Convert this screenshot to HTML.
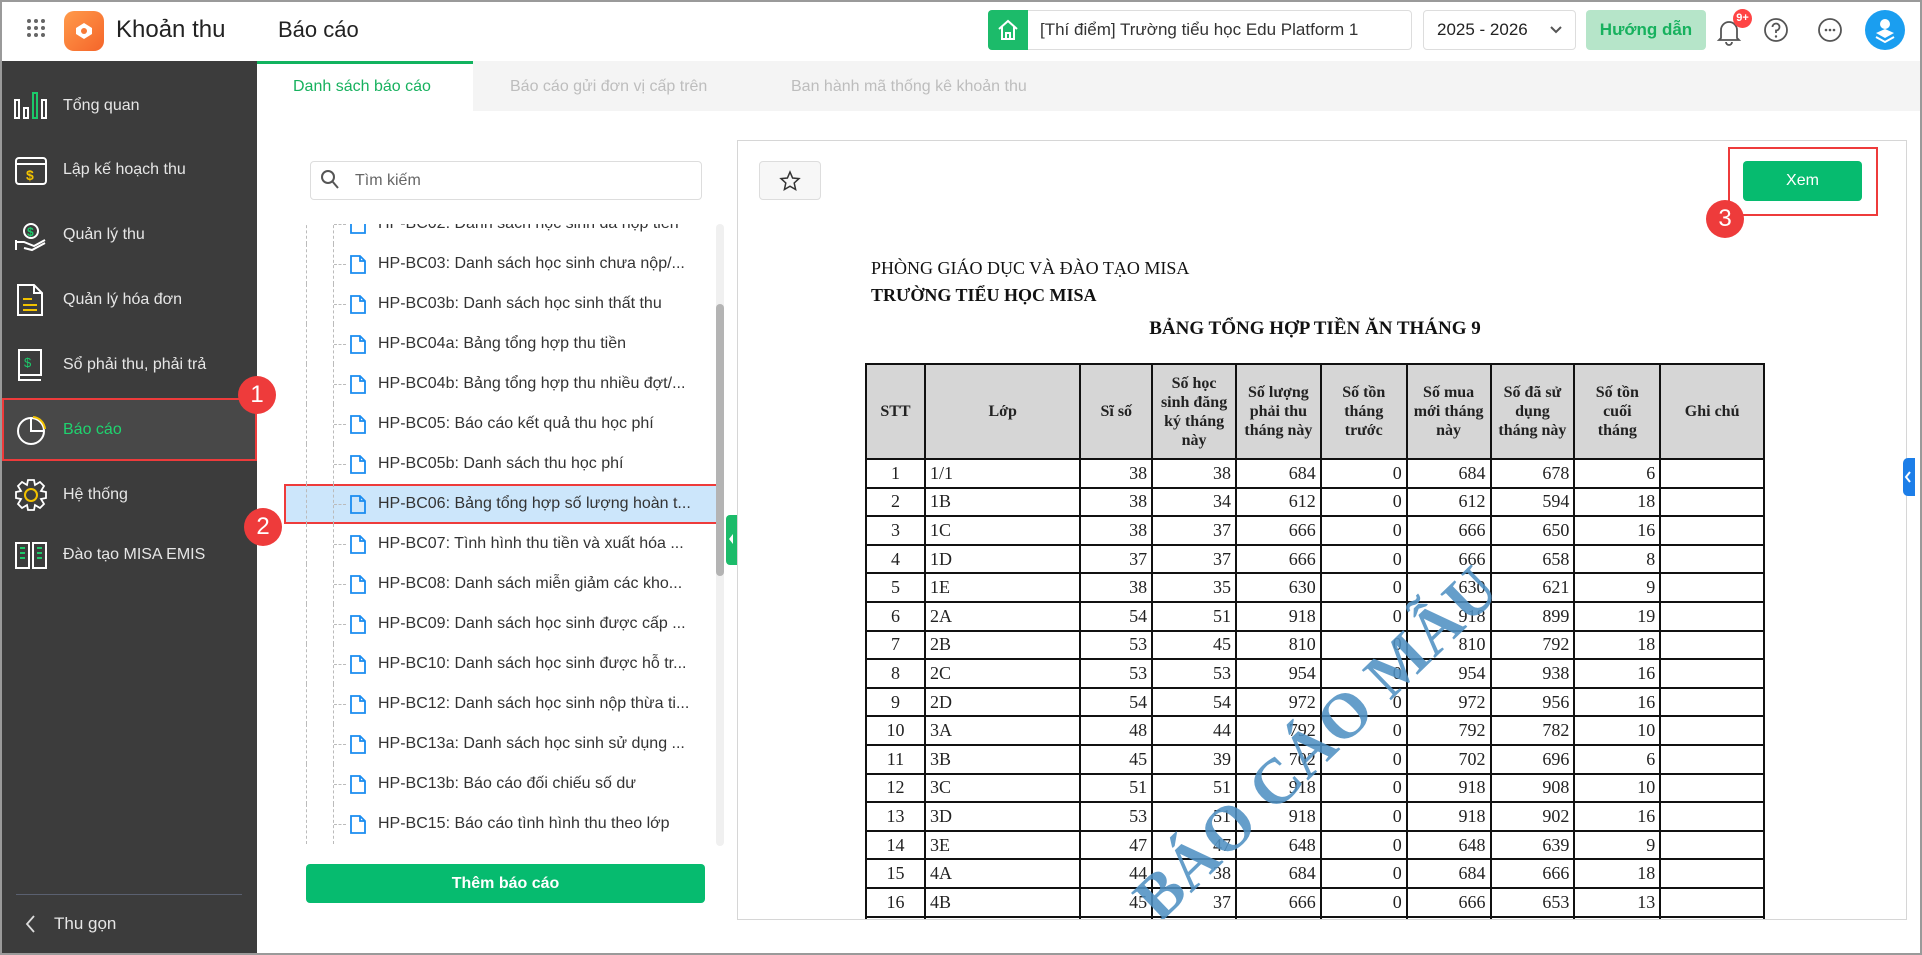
<!DOCTYPE html>
<html><head><meta charset="utf-8"><style>
*{box-sizing:border-box;margin:0;padding:0}
body{width:1922px;height:955px;overflow:hidden;background:#fff;font-family:"Liberation Sans",Arial,sans-serif;position:relative;color:#222}
.a{position:absolute}
.frame{position:absolute;left:0;top:0;width:1922px;height:955px;border:2px solid #9a9a9a;pointer-events:none;z-index:50}
.side{left:0;top:61px;width:257px;height:894px;background:#3c3c3c}
.si{position:absolute;left:0;width:257px;height:40px;display:flex;align-items:center;color:#e6e6e6;font-size:16px}
.si svg{position:absolute;left:14px}
.si span{position:absolute;left:63px}
.tabs{left:257px;top:61px;width:1665px;height:50px;background:#f4f4f4}
.li{position:absolute;left:284px;width:442px;height:40px}
.li .t{position:absolute;left:94px;top:11px;font-size:16px;color:#333;white-space:nowrap}
.li svg{position:absolute;left:66px;top:11px}
.li .v1{position:absolute;left:22px;top:0;height:40px;border-left:1px dashed #bbb}
.li .v2{position:absolute;left:49px;top:0;height:40px;border-left:1px dashed #bbb}
.li .h{position:absolute;left:50px;top:20px;width:12px;border-top:1px dashed #bbb}
.badge{position:absolute;width:38px;height:38px;border-radius:50%;background:#ee3b3b;color:#fff;font-size:24px;text-align:center;line-height:38px;z-index:20}
table{border-collapse:collapse;font-family:"Liberation Serif","Times New Roman",serif}
td,th{border:2px solid #111;font-size:18px;height:28.6px;padding:0 4px}
th{background:#d6d6d6;font-size:16px;line-height:19px;font-weight:bold;text-align:center;padding:0 9px}
td{text-align:right}
td:first-child{text-align:center}
td:nth-child(2){text-align:left}
</style></head><body>
<div class="a" style="left:0;top:0;width:1922px;height:61px;background:#fff;box-shadow:0 1px 3px rgba(0,0,0,.08)"></div>
<svg class="a" style="left:26px;top:18px" width="20" height="20"><g fill="#666"><circle cx="3" cy="3" r="2"/><circle cx="10" cy="3" r="2"/><circle cx="17" cy="3" r="2"/><circle cx="3" cy="10" r="2"/><circle cx="10" cy="10" r="2"/><circle cx="17" cy="10" r="2"/><circle cx="3" cy="17" r="2"/><circle cx="10" cy="17" r="2"/><circle cx="17" cy="17" r="2"/></g></svg>
<div class="a" style="left:64px;top:11px;width:40px;height:40px;border-radius:10px;background:linear-gradient(135deg,#ff9a4a,#f5652a)"></div>
<svg class="a" style="left:72px;top:19px" width="24" height="24"><path d="M4 9 L12 4 L20 9 L20 15 L12 20 L4 15Z" fill="#fff"/><circle cx="12" cy="12" r="3" fill="#f77a37"/></svg>
<div class="a" style="left:116px;top:16px;font-size:24px;font-weight:500;color:#222">Khoản thu</div>
<div class="a" style="left:278px;top:17px;font-size:22px;color:#222">Báo cáo</div>
<div class="a" style="left:988px;top:10px;width:424px;height:40px;border:1px solid #ddd;border-radius:4px"></div>
<div class="a" style="left:988px;top:10px;width:40px;height:40px;background:#1cbb6a;border-radius:4px 0 0 4px"></div>
<svg class="a" style="left:996px;top:18px" width="24" height="24"><path d="M3 11 L12 3 L21 11 M6 9 V21 H18 V9 M10 21 V15 H14 V21" fill="none" stroke="#fff" stroke-width="2"/></svg>
<div class="a" style="left:1040px;top:20px;font-size:17px;color:#333">[Thí điểm] Trường tiểu học Edu Platform 1</div>
<div class="a" style="left:1423px;top:10px;width:153px;height:40px;border:1px solid #ddd;border-radius:4px"></div>
<div class="a" style="left:1437px;top:20px;font-size:17px;color:#222">2025 - 2026</div>
<svg class="a" style="left:1550px;top:25px" width="12" height="10"><path d="M1 2 L6 7 L11 2" fill="none" stroke="#555" stroke-width="2"/></svg>
<div class="a" style="left:1586px;top:10px;width:120px;height:40px;background:#b6e5c9;border-radius:4px;color:#17b15e;font-size:17px;font-weight:bold;text-align:center;line-height:40px">Hướng dẫn</div>
<svg class="a" style="left:1715px;top:16px" width="28" height="30"><path d="M6 22 V14 A8 8 0 0 1 22 14 V22 L24 24 H4 Z M11 26 A3 3 0 0 0 17 26" fill="none" stroke="#555" stroke-width="1.8"/></svg>
<div class="a" style="left:1733px;top:9px;width:19px;height:19px;border-radius:50%;background:#f44;color:#fff;font-size:11px;font-weight:bold;text-align:center;line-height:19px">9+</div>
<svg class="a" style="left:1763px;top:17px" width="26" height="26"><circle cx="13" cy="13" r="11" fill="none" stroke="#555" stroke-width="1.8"/><path d="M9.5 10 A3.5 3.5 0 1 1 13 13.5 V16" fill="none" stroke="#555" stroke-width="1.8"/><circle cx="13" cy="19.5" r="1.2" fill="#555"/></svg>
<svg class="a" style="left:1817px;top:17px" width="26" height="26"><circle cx="13" cy="13" r="11" fill="none" stroke="#555" stroke-width="1.8"/><circle cx="9" cy="13" r="1.3" fill="#555"/><circle cx="13" cy="13" r="1.3" fill="#555"/><circle cx="17" cy="13" r="1.3" fill="#555"/></svg>
<div class="a" style="left:1865px;top:10px;width:40px;height:40px;border-radius:50%;background:#1a9ef0"></div>
<svg class="a" style="left:1873px;top:16px" width="24" height="28"><circle cx="12" cy="8" r="5" fill="#fff"/><path d="M3 17 L12 22 L21 17 L12 13Z" fill="#fff"/><path d="M3 21 L12 26 L21 21" fill="none" stroke="#fff" stroke-width="2"/></svg>

<div class="a side"></div>
<div class="si" style="top:86px"><svg width="34" height="28"><g fill="none" stroke="#fff" stroke-width="2"><rect x="1" y="8" width="4" height="18"/><rect x="10" y="16" width="4" height="10"/><rect x="28" y="8" width="4" height="18"/></g><rect x="19" y="1" width="4" height="25" fill="none" stroke="#1cc96a" stroke-width="2"/></svg><span>Tổng quan</span></div>
<div class="si" style="top:150px"><svg width="34" height="32"><rect x="2" y="4" width="30" height="26" rx="3" fill="none" stroke="#fff" stroke-width="2"/><path d="M2 10 H32" stroke="#fff" stroke-width="2"/><text x="12" y="26" fill="#f2c200" font-size="14" font-weight="bold" font-family="Liberation Sans">$</text></svg><span>Lập kế hoạch thu</span></div>
<div class="si" style="top:215px"><svg width="34" height="34"><circle cx="17" cy="13" r="7" fill="none" stroke="#fff" stroke-width="2"/><text x="13" y="18" fill="#1cc96a" font-size="12" font-weight="bold" font-family="Liberation Sans">$</text><path d="M2 24 H10 L20 28 L31 22 M2 22 V32 M10 30 L18 32 L31 25" fill="none" stroke="#fff" stroke-width="2"/></svg><span>Quản lý thu</span></div>
<div class="si" style="top:280px"><svg width="34" height="34"><path d="M4 2 H20 L28 10 V32 H4 Z M20 2 V10 H28" fill="none" stroke="#fff" stroke-width="2"/><path d="M9 16 H18 M9 22 H23 M9 27 H23" stroke="#f2c200" stroke-width="2"/></svg><span>Quản lý hóa đơn</span></div>
<div class="si" style="top:345px"><svg width="34" height="34"><path d="M5 2 H27 V27 H5 Z M5 27 V32 H27" fill="none" stroke="#fff" stroke-width="2"/><text x="10" y="19" fill="#1cc96a" font-size="13" font-family="Liberation Sans">$</text></svg><span>Sổ phải thu, phải trả</span></div>
<div class="a" style="left:2px;top:398px;width:255px;height:63px;background:#484848;border:2px solid #ee3b3b"></div>
<div class="si" style="top:410px;z-index:2"><svg width="34" height="34"><circle cx="17" cy="18" r="13" fill="none" stroke="#fff" stroke-width="2"/><path d="M17 5 V18 H30" fill="none" stroke="#fff" stroke-width="2"/><path d="M19 4 A13 13 0 0 1 31 16" fill="none" stroke="#f2c200" stroke-width="2"/></svg><span style="color:#1fd36f">Báo cáo</span></div>
<div class="si" style="top:475px"><svg width="34" height="34"><circle cx="17" cy="17" r="6" fill="none" stroke="#f2c200" stroke-width="2"/><path d="M14 2 H20 L21 7 L26 4 L30 8 L27 13 L32 14 V20 L27 21 L30 26 L26 30 L21 27 L20 32 H14 L13 27 L8 30 L4 26 L7 21 L2 20 V14 L7 13 L4 8 L8 4 L13 7Z" fill="none" stroke="#fff" stroke-width="1.8"/></svg><span>Hệ thống</span></div>
<div class="si" style="top:535px"><svg width="34" height="34"><path d="M2 5 H15 V30 H2 Z M19 5 H32 V30 H19 Z" fill="none" stroke="#fff" stroke-width="2"/><path d="M6 10 H11 M6 15 H11 M6 20 H11 M23 10 H28 M23 15 H28 M23 20 H28" stroke="#1cc96a" stroke-width="2"/></svg><span>Đào tạo MISA EMIS</span></div>
<div class="a" style="left:16px;top:894px;width:226px;border-top:1px solid #5a6070"></div>
<svg class="a" style="left:24px;top:914px" width="12" height="20"><path d="M10 2 L3 10 L10 18" fill="none" stroke="#ddd" stroke-width="1.8"/></svg>
<div class="a" style="left:54px;top:914px;font-size:17px;color:#e6e6e6">Thu gọn</div>
<div class="badge" style="left:238px;top:376px">1</div>

<div class="a tabs"></div>
<div class="a" style="left:257px;top:61px;width:216px;height:50px;background:#fff;border-top:3px solid #12b35f"></div>
<div class="a" style="left:293px;top:78px;font-size:16px;color:#17b15e;font-weight:500">Danh sách báo cáo</div>
<div class="a" style="left:510px;top:78px;font-size:16px;color:#bdbdbd">Báo cáo gửi đơn vị cấp trên</div>
<div class="a" style="left:791px;top:78px;font-size:16px;color:#bdbdbd">Ban hành mã thống kê khoản thu</div>

<div class="a" style="left:310px;top:161px;width:392px;height:39px;border:1px solid #ddd;border-radius:4px"></div>
<svg class="a" style="left:320px;top:169px" width="20" height="22"><circle cx="8" cy="8" r="6" fill="none" stroke="#555" stroke-width="2"/><path d="M12.5 12.5 L18 19" stroke="#555" stroke-width="2"/></svg>
<div class="a" style="left:355px;top:172px;font-size:16px;color:#666">Tìm kiếm</div>
<div class="a" style="left:716px;top:224px;width:8px;height:622px;background:#f0f0f0;border-radius:4px"></div>
<div class="a" style="left:716px;top:304px;width:8px;height:272px;background:#b4b4b4;border-radius:4px"></div>
<div class="a" style="left:726px;top:515px;width:11px;height:50px;background:#1cbb6a;border-radius:4px 0 0 4px"></div>
<svg class="a" style="left:727px;top:532px" width="8" height="14"><path d="M6 2 L2 7 L6 12Z" fill="#fff"/></svg>
<div class="a" style="left:306px;top:864px;width:399px;height:39px;background:#06bb6f;border-radius:4px;color:#fff;font-size:16px;font-weight:bold;text-align:center;line-height:39px">Thêm báo cáo</div>
<div class="badge" style="left:244px;top:508px">2</div>

<div class="a" style="left:737px;top:140px;width:1170px;height:780px;border:1px solid #d6d6d6;overflow:hidden">
  <div class="a" style="left:21px;top:20px;width:62px;height:39px;border:1px solid #ddd;border-radius:4px;background:#f7f7f7"></div>
  <svg class="a" style="left:41px;top:29px" width="22" height="22"><path d="M11 2 L13.6 8 L20 8.6 L15.2 13 L16.6 19.5 L11 16.2 L5.4 19.5 L6.8 13 L2 8.6 L8.4 8Z" fill="none" stroke="#333" stroke-width="1.5"/></svg>
  <div class="a" style="left:1005px;top:20px;width:119px;height:40px;background:#06bb6f;border-radius:4px;color:#fff;font-size:16px;text-align:center;line-height:40px">Xem</div>
  <div class="a" style="left:133px;top:117px;font-family:'Liberation Serif',serif;font-size:18px;color:#111">PHÒNG GIÁO DỤC VÀ ĐÀO TẠO MISA</div>
  <div class="a" style="left:133px;top:144px;font-family:'Liberation Serif',serif;font-size:18px;font-weight:bold;color:#111">TRƯỜNG TIỂU HỌC MISA</div>
  <div class="a" style="left:127px;top:177px;width:900px;text-align:center;font-family:'Liberation Serif',serif;font-size:19px;font-weight:bold;color:#111">BẢNG TỔNG HỢP TIỀN ĂN THÁNG 9</div>
  <table class="a" style="left:127px;top:222px;width:900px">
   <colgroup><col style="width:59px"><col style="width:156px"><col style="width:72px"><col style="width:84px"><col style="width:85px"><col style="width:86px"><col style="width:84px"><col style="width:84px"><col style="width:86px"><col style="width:104px"></colgroup>
   <tr style="height:95px"><th>STT</th><th>Lớp</th><th>Sĩ số</th><th style="padding:0 4px">Số học sinh đăng ký tháng này</th><th style="padding:0 4px">Số lượng phải thu tháng này</th><th style="padding:0 14px">Số tồn tháng trước</th><th style="padding:0 4px">Số mua mới tháng này</th><th style="padding:0 4px">Số đã sử dụng tháng này</th><th style="padding:0 18px">Số tồn cuối tháng</th><th>Ghi chú</th></tr>
   <tr><td>1</td><td>1/1</td><td>38</td><td>38</td><td>684</td><td>0</td><td>684</td><td>678</td><td>6</td><td></td></tr>
   <tr><td>2</td><td>1B</td><td>38</td><td>34</td><td>612</td><td>0</td><td>612</td><td>594</td><td>18</td><td></td></tr>
   <tr><td>3</td><td>1C</td><td>38</td><td>37</td><td>666</td><td>0</td><td>666</td><td>650</td><td>16</td><td></td></tr>
   <tr><td>4</td><td>1D</td><td>37</td><td>37</td><td>666</td><td>0</td><td>666</td><td>658</td><td>8</td><td></td></tr>
   <tr><td>5</td><td>1E</td><td>38</td><td>35</td><td>630</td><td>0</td><td>630</td><td>621</td><td>9</td><td></td></tr>
   <tr><td>6</td><td>2A</td><td>54</td><td>51</td><td>918</td><td>0</td><td>918</td><td>899</td><td>19</td><td></td></tr>
   <tr><td>7</td><td>2B</td><td>53</td><td>45</td><td>810</td><td>0</td><td>810</td><td>792</td><td>18</td><td></td></tr>
   <tr><td>8</td><td>2C</td><td>53</td><td>53</td><td>954</td><td>0</td><td>954</td><td>938</td><td>16</td><td></td></tr>
   <tr><td>9</td><td>2D</td><td>54</td><td>54</td><td>972</td><td>0</td><td>972</td><td>956</td><td>16</td><td></td></tr>
   <tr><td>10</td><td>3A</td><td>48</td><td>44</td><td>792</td><td>0</td><td>792</td><td>782</td><td>10</td><td></td></tr>
   <tr><td>11</td><td>3B</td><td>45</td><td>39</td><td>702</td><td>0</td><td>702</td><td>696</td><td>6</td><td></td></tr>
   <tr><td>12</td><td>3C</td><td>51</td><td>51</td><td>918</td><td>0</td><td>918</td><td>908</td><td>10</td><td></td></tr>
   <tr><td>13</td><td>3D</td><td>53</td><td>51</td><td>918</td><td>0</td><td>918</td><td>902</td><td>16</td><td></td></tr>
   <tr><td>14</td><td>3E</td><td>47</td><td>47</td><td>648</td><td>0</td><td>648</td><td>639</td><td>9</td><td></td></tr>
   <tr><td>15</td><td>4A</td><td>44</td><td>38</td><td>684</td><td>0</td><td>684</td><td>666</td><td>18</td><td></td></tr>
   <tr><td>16</td><td>4B</td><td>45</td><td>37</td><td>666</td><td>0</td><td>666</td><td>653</td><td>13</td><td></td></tr>
   <tr><td>17</td><td>4C</td><td>53</td><td>53</td><td>954</td><td>0</td><td>954</td><td>940</td><td>14</td><td></td></tr>
  </table>
  <div class="a" style="left:345px;top:578px;width:440px;text-align:center;font-family:'Liberation Serif',serif;font-size:64px;font-weight:bold;color:rgba(80,145,195,.88);transform:rotate(-44deg);white-space:nowrap;letter-spacing:1px">BÁO CÁO MẪU</div>
</div>
<div class="a" style="left:1728px;top:147px;width:150px;height:69px;border:2px solid #ee3b3b"></div>
<div class="badge" style="left:1706px;top:200px">3</div>
<div class="a" style="left:1903px;top:458px;width:12px;height:38px;background:#1c7ee8;border-radius:5px 0 0 5px"></div>
<svg class="a" style="left:1904px;top:470px" width="8" height="14"><path d="M6 2 L2 7 L6 12" fill="none" stroke="#fff" stroke-width="2"/></svg>

<div class="a" style="left:284px;top:224px;width:432px;height:622px;overflow:hidden">
<div style="position:absolute;left:0;top:-20px;width:432px">
<div class="li" style="left:0;top:0"><i class="v1"></i><i class="v2"></i><i class="h"></i><svg width="16" height="19"><path d="M1 1 H10 L15 6 V18 H1Z M10 1 V6 H15" fill="none" stroke="#1a8cf0" stroke-width="1.8"/></svg><span class="t">HP-BC02: Danh sách học sinh đã nộp tiền</span></div>
<div class="li" style="left:0;top:40px"><i class="v1"></i><i class="v2"></i><i class="h"></i><svg width="16" height="19"><path d="M1 1 H10 L15 6 V18 H1Z M10 1 V6 H15" fill="none" stroke="#1a8cf0" stroke-width="1.8"/></svg><span class="t">HP-BC03: Danh sách học sinh chưa nộp/...</span></div>
<div class="li" style="left:0;top:80px"><i class="v1"></i><i class="v2"></i><i class="h"></i><svg width="16" height="19"><path d="M1 1 H10 L15 6 V18 H1Z M10 1 V6 H15" fill="none" stroke="#1a8cf0" stroke-width="1.8"/></svg><span class="t">HP-BC03b: Danh sách học sinh thất thu</span></div>
<div class="li" style="left:0;top:120px"><i class="v1"></i><i class="v2"></i><i class="h"></i><svg width="16" height="19"><path d="M1 1 H10 L15 6 V18 H1Z M10 1 V6 H15" fill="none" stroke="#1a8cf0" stroke-width="1.8"/></svg><span class="t">HP-BC04a: Bảng tổng hợp thu tiền</span></div>
<div class="li" style="left:0;top:160px"><i class="v1"></i><i class="v2"></i><i class="h"></i><svg width="16" height="19"><path d="M1 1 H10 L15 6 V18 H1Z M10 1 V6 H15" fill="none" stroke="#1a8cf0" stroke-width="1.8"/></svg><span class="t">HP-BC04b: Bảng tổng hợp thu nhiều đợt/...</span></div>
<div class="li" style="left:0;top:200px"><i class="v1"></i><i class="v2"></i><i class="h"></i><svg width="16" height="19"><path d="M1 1 H10 L15 6 V18 H1Z M10 1 V6 H15" fill="none" stroke="#1a8cf0" stroke-width="1.8"/></svg><span class="t">HP-BC05: Báo cáo kết quả thu học phí</span></div>
<div class="li" style="left:0;top:240px"><i class="v1"></i><i class="v2"></i><i class="h"></i><svg width="16" height="19"><path d="M1 1 H10 L15 6 V18 H1Z M10 1 V6 H15" fill="none" stroke="#1a8cf0" stroke-width="1.8"/></svg><span class="t">HP-BC05b: Danh sách thu học phí</span></div>
<div class="li" style="left:0;top:280px;background:#cce6fb;border:2px solid #ee3b3b"><i class="v1" style="left:20px;top:-2px"></i><i class="v2" style="left:47px;top:-2px"></i><i class="h" style="left:48px;top:18px"></i><svg width="16" height="19" style="left:64px;top:9px"><path d="M1 1 H10 L15 6 V18 H1Z M10 1 V6 H15" fill="none" stroke="#1a8cf0" stroke-width="1.8"/></svg><span class="t" style="left:92px;top:9px">HP-BC06: Bảng tổng hợp số lượng hoàn t...</span></div>
<div class="li" style="left:0;top:320px"><i class="v1"></i><i class="v2"></i><i class="h"></i><svg width="16" height="19"><path d="M1 1 H10 L15 6 V18 H1Z M10 1 V6 H15" fill="none" stroke="#1a8cf0" stroke-width="1.8"/></svg><span class="t">HP-BC07: Tình hình thu tiền và xuất hóa ...</span></div>
<div class="li" style="left:0;top:360px"><i class="v1"></i><i class="v2"></i><i class="h"></i><svg width="16" height="19"><path d="M1 1 H10 L15 6 V18 H1Z M10 1 V6 H15" fill="none" stroke="#1a8cf0" stroke-width="1.8"/></svg><span class="t">HP-BC08: Danh sách miễn giảm các kho...</span></div>
<div class="li" style="left:0;top:400px"><i class="v1"></i><i class="v2"></i><i class="h"></i><svg width="16" height="19"><path d="M1 1 H10 L15 6 V18 H1Z M10 1 V6 H15" fill="none" stroke="#1a8cf0" stroke-width="1.8"/></svg><span class="t">HP-BC09: Danh sách học sinh được cấp ...</span></div>
<div class="li" style="left:0;top:440px"><i class="v1"></i><i class="v2"></i><i class="h"></i><svg width="16" height="19"><path d="M1 1 H10 L15 6 V18 H1Z M10 1 V6 H15" fill="none" stroke="#1a8cf0" stroke-width="1.8"/></svg><span class="t">HP-BC10: Danh sách học sinh được hỗ tr...</span></div>
<div class="li" style="left:0;top:480px"><i class="v1"></i><i class="v2"></i><i class="h"></i><svg width="16" height="19"><path d="M1 1 H10 L15 6 V18 H1Z M10 1 V6 H15" fill="none" stroke="#1a8cf0" stroke-width="1.8"/></svg><span class="t">HP-BC12: Danh sách học sinh nộp thừa ti...</span></div>
<div class="li" style="left:0;top:520px"><i class="v1"></i><i class="v2"></i><i class="h"></i><svg width="16" height="19"><path d="M1 1 H10 L15 6 V18 H1Z M10 1 V6 H15" fill="none" stroke="#1a8cf0" stroke-width="1.8"/></svg><span class="t">HP-BC13a: Danh sách học sinh sử dụng ...</span></div>
<div class="li" style="left:0;top:560px"><i class="v1"></i><i class="v2"></i><i class="h"></i><svg width="16" height="19"><path d="M1 1 H10 L15 6 V18 H1Z M10 1 V6 H15" fill="none" stroke="#1a8cf0" stroke-width="1.8"/></svg><span class="t">HP-BC13b: Báo cáo đối chiếu số dư</span></div>
<div class="li" style="left:0;top:600px"><i class="v1"></i><i class="v2"></i><i class="h"></i><svg width="16" height="19"><path d="M1 1 H10 L15 6 V18 H1Z M10 1 V6 H15" fill="none" stroke="#1a8cf0" stroke-width="1.8"/></svg><span class="t">HP-BC15: Báo cáo tình hình thu theo lớp</span></div>
</div>
</div>
<div class="frame"></div>
</body></html>
